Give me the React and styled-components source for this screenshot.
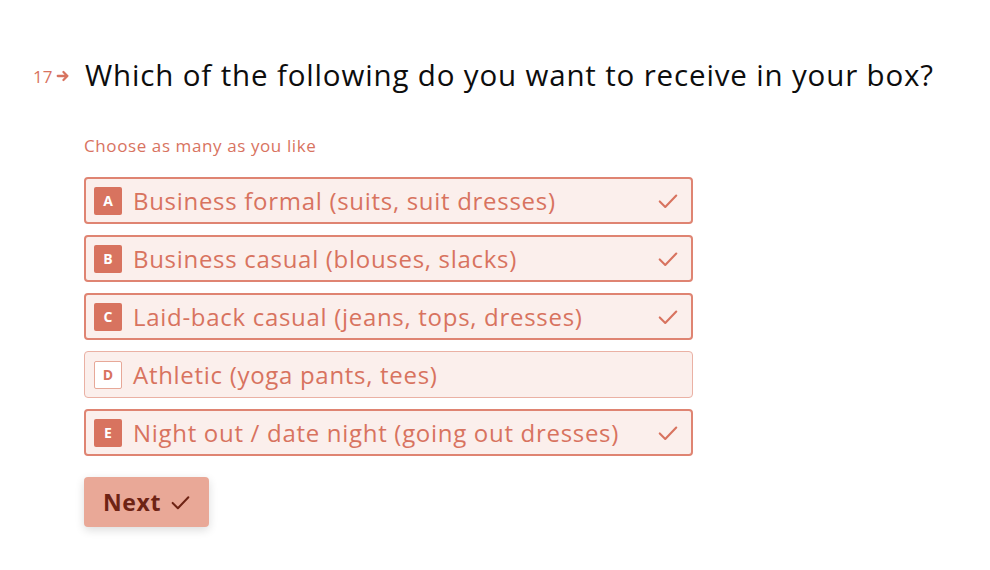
import React, { useState } from 'react';
import styled, { createGlobalStyle } from 'styled-components';

const GlobalStyle = createGlobalStyle`
    body {
        margin: 0;
        background: #fff;
        font-family: "Open Sans", "Liberation Sans", sans-serif;
    }
`;

const Page = styled.main`
    padding: 56px 0 0 33px;
    width: 990px;
    height: 570px;
    box-sizing: border-box;
`;

const Header = styled.header`
    display: flex;
    align-items: center;
`;

const Counter = styled.div`
    width: 52px;
    display: flex;
    align-items: center;
    gap: 4px;
    color: #d8735f;
    font-size: 17px;
    padding-top: 2px;
`;

const Title = styled.h1`
    margin: 0;
    font-size: 29.5px;
    font-weight: 400;
    letter-spacing: 0.85px;
    line-height: 38px;
    color: #0d0d0d;
`;

const Body = styled.section`
    margin-left: 51px;
`;

const Hint = styled.p`
    margin: 41px 0 0;
    font-size: 17px;
    letter-spacing: 0.6px;
    line-height: 22px;
    color: #d8735f;
`;

const Options = styled.ul`
    list-style: none;
    margin: 20px 0 0;
    padding: 0;
    width: 609px;
    display: flex;
    flex-direction: column;
    gap: 11px;
`;

const Option = styled.li`
    height: 47px;
    box-sizing: border-box;
    display: flex;
    align-items: center;
    padding: 0 12px 0 ${p => (p.$selected ? 8 : 9)}px;
    border: ${p => (p.$selected ? '2px solid #df8472' : '1px solid #eab1a4')};
    border-radius: 4px;
    background: #fbefec;
    color: #d8735f;
    cursor: pointer;
`;

const Key = styled.span`
    width: 28px;
    height: 28px;
    box-sizing: border-box;
    flex: none;
    display: flex;
    align-items: center;
    justify-content: center;
    border-radius: 2px;
    font-size: 14px;
    font-weight: 700;
    background: ${p => (p.$selected ? '#d8735f' : '#fff')};
    color: ${p => (p.$selected ? '#fff' : '#d8735f')};
    border: ${p => (p.$selected ? 'none' : '1px solid #e7a898')};
`;

const Label = styled.span`
    flex: 1;
    margin-left: 11px;
    font-size: 24px;
    letter-spacing: 0.7px;
    line-height: 30px;
`;

const NextButton = styled.button`
    margin-top: 21px;
    height: 50px;
    padding: 0 18px 0 19px;
    display: flex;
    align-items: center;
    gap: 9px;
    border: none;
    border-radius: 4px;
    background: #e9a897;
    color: #6e2314;
    font-family: inherit;
    font-size: 23px;
    letter-spacing: 0.6px;
    font-weight: 700;
    box-shadow: 0 3px 10px rgba(0, 0, 0, .14);
    cursor: pointer;
`;

const Check = ({ size = 22, color = '#d8735f', width = 2.3 }) => (
    <svg width={size} height={size} viewBox="0 0 24 24" fill="none">
        <path d="M3 12.5l6 6L21 6" stroke={color} strokeWidth={width} strokeLinecap="round" strokeLinejoin="round" />
    </svg>
);

const options = [
    { key: 'A', label: 'Business formal (suits, suit dresses)' },
    { key: 'B', label: 'Business casual (blouses, slacks)' },
    { key: 'C', label: 'Laid-back casual (jeans, tops, dresses)' },
    { key: 'D', label: 'Athletic (yoga pants, tees)' },
    { key: 'E', label: 'Night out / date night (going out dresses)' },
];

function App() {
    let [selected, setSelected] = useState(['A', 'B', 'C', 'E']);

    const toggle = key => {
        setSelected(selected.includes(key) ? selected.filter(k => k !== key) : [...selected, key]);
    };

    return (
        <Page>
            <GlobalStyle />
            <Header>
                <Counter>
                    17
                    <svg width="14" height="14" viewBox="0 0 16 16" fill="none">
                        <path d="M2 8h11M8.5 3.5L13 8l-4.5 4.5" stroke="#d8735f" strokeWidth="2.6" strokeLinecap="round" strokeLinejoin="round" />
                    </svg>
                </Counter>
                <Title>Which of the following do you want to receive in your box?</Title>
            </Header>
            <Body>
                <Hint>Choose as many as you like</Hint>
                <Options>
                    {options.map(o => {
                        const on = selected.includes(o.key);
                        return (
                            <Option key={o.key} $selected={on} onClick={() => toggle(o.key)}>
                                <Key $selected={on}>{o.key}</Key>
                                <Label>{o.label}</Label>
                                {on && <Check />}
                            </Option>
                        );
                    })}
                </Options>
                <NextButton>
                    Next
                    <Check size={21} color="#6e2314" width={2.3} />
                </NextButton>
            </Body>
        </Page>
    );
}

export default App;
